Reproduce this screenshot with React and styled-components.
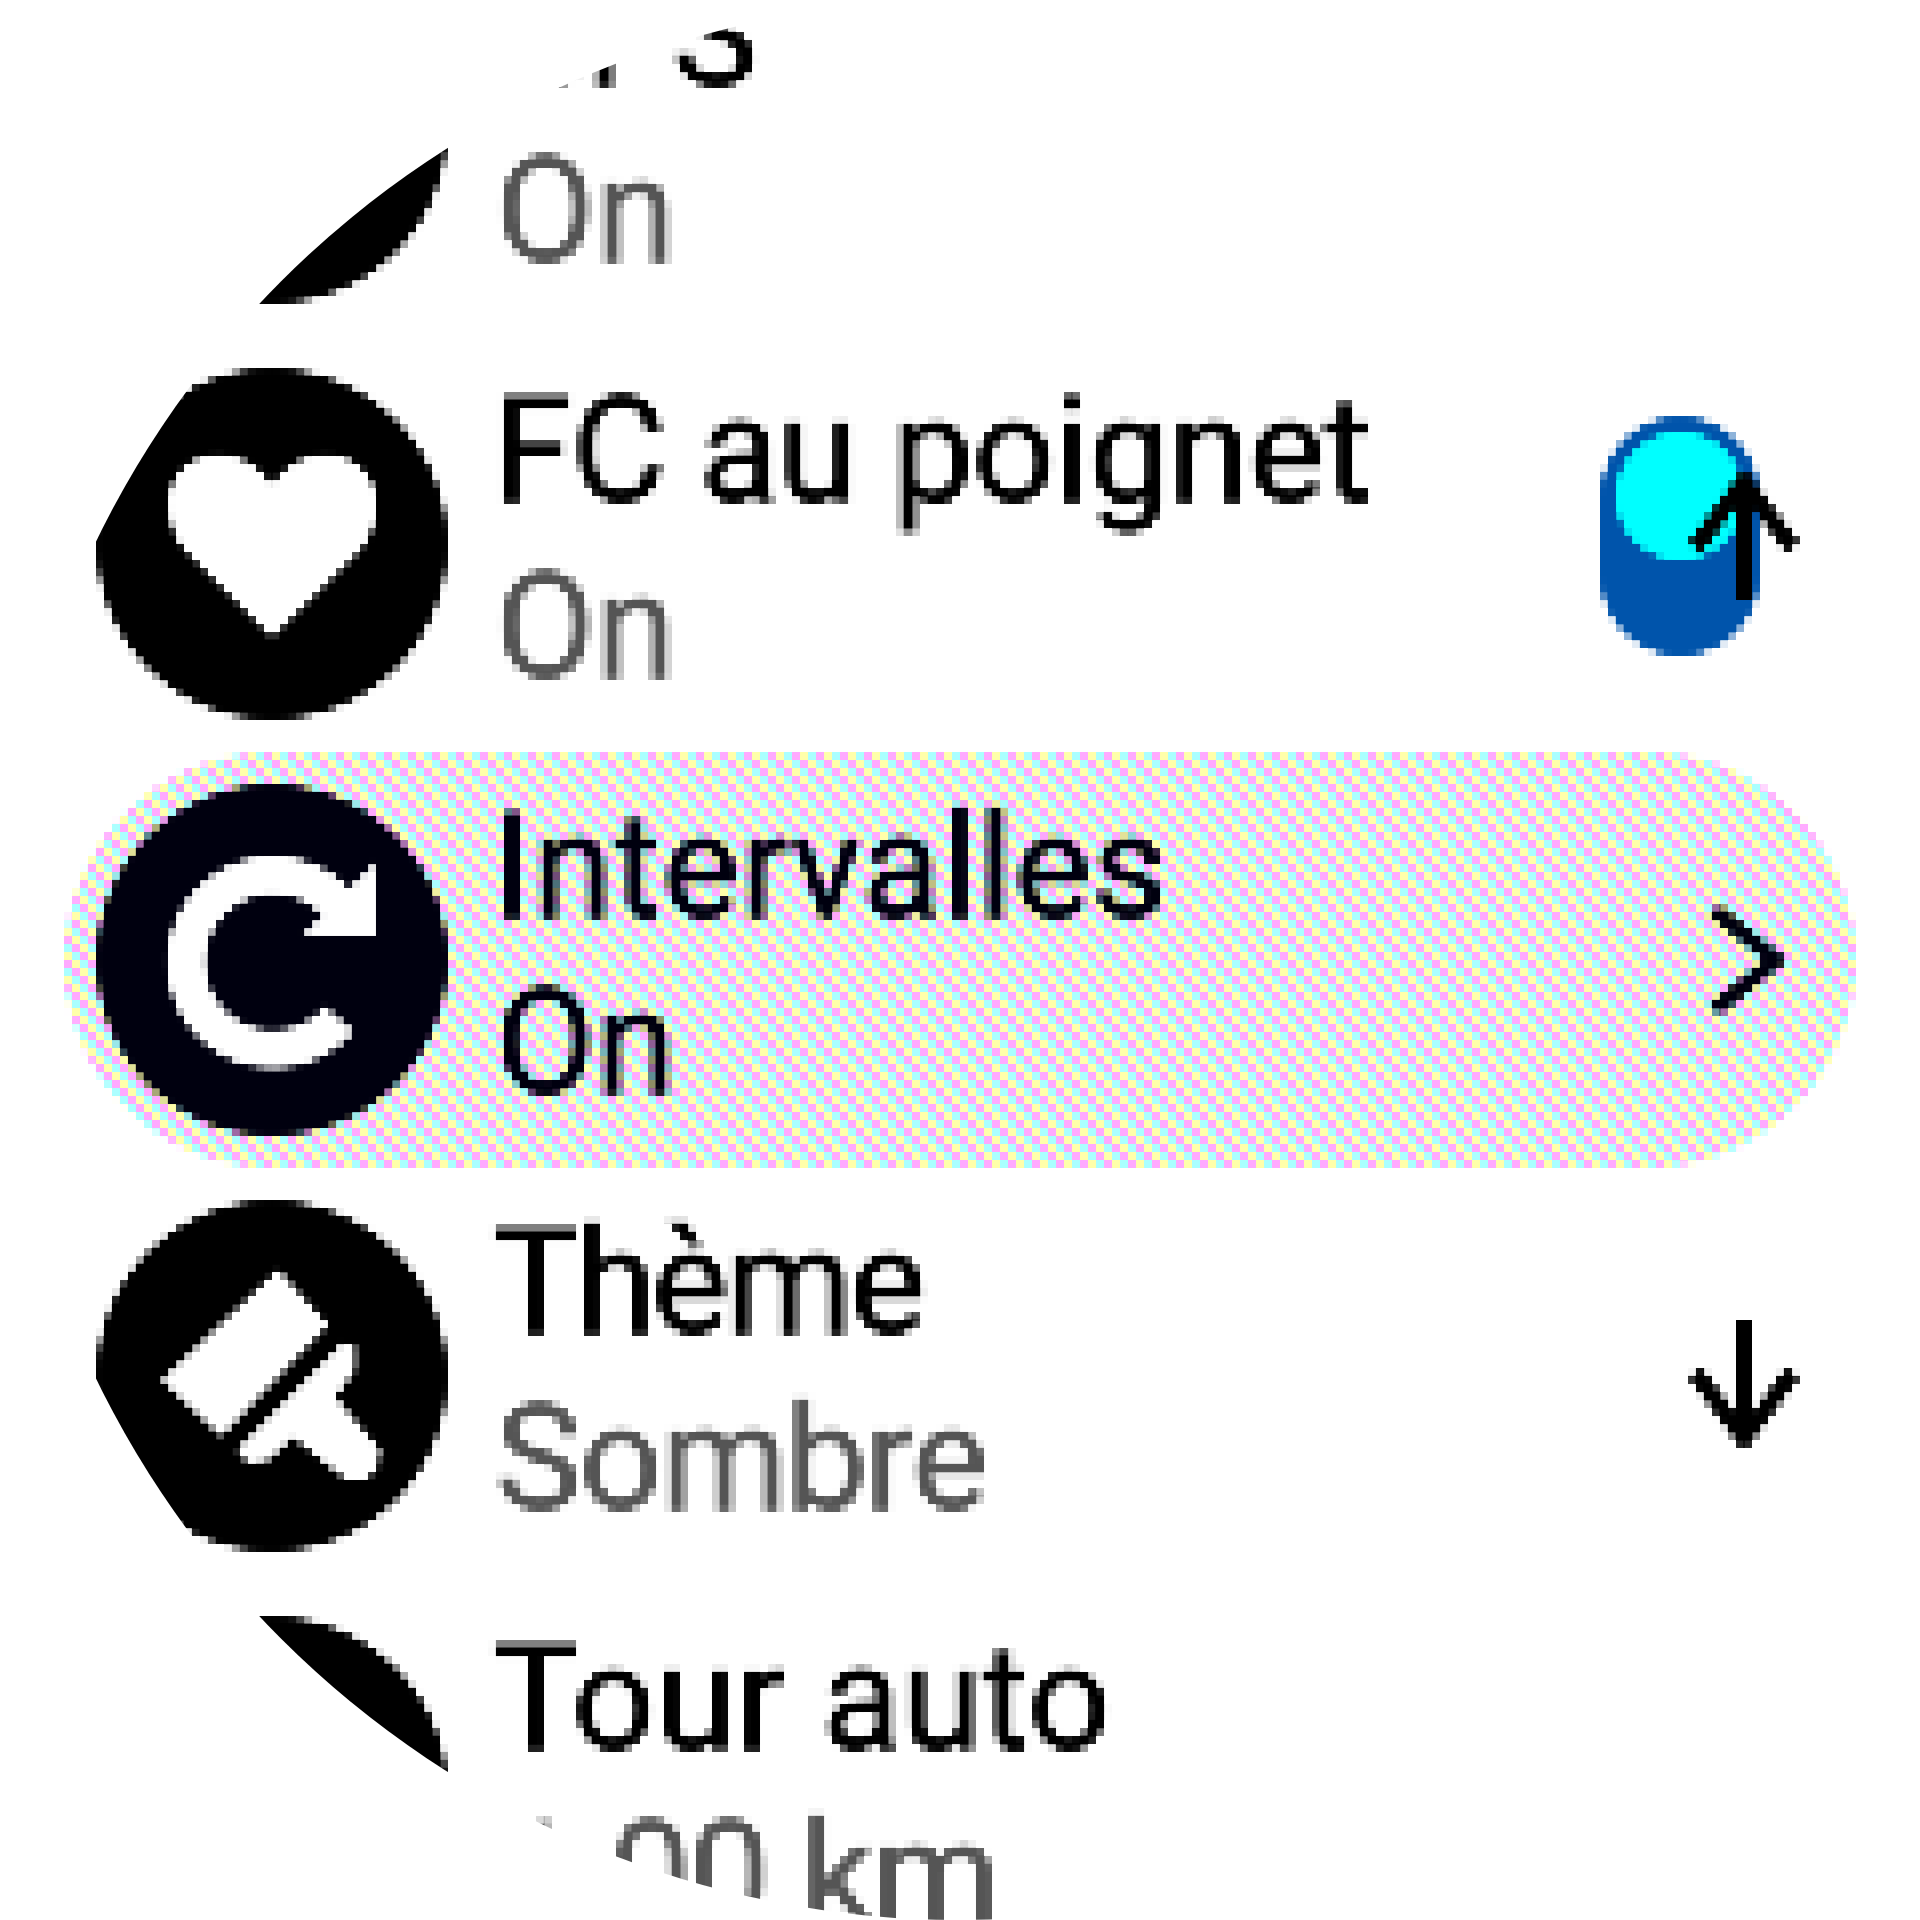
import React from "react";
import styled, { createGlobalStyle } from "styled-components";

const GlobalStyle = createGlobalStyle`
  html, body {
    margin: 0;
    padding: 0;
    background: #fff;
  }
`;

// round watch face, the edge stays sharp while the content is low-res
const Screen = styled.div`
  width: 1920px;
  height: 1920px;
  border-radius: 50%;
  overflow: hidden;
  background: #fff;
`;

const Content = styled.div`
  position: relative;
  width: 1920px;
  height: 1920px;
  display: flex;
  flex-direction: column;
  justify-content: center;
  overflow: hidden;
  background: #fff;
  font-family: Roboto, "Liberation Sans", sans-serif;
  filter: url(#lowres);
`;

const FilterDefs = styled.svg`
  position: absolute;
  width: 0;
  height: 0;
`;

const cell = (color, x, y) =>
  `conic-gradient(from 270deg at 8px 8px, ${color} 25%, transparent 0) ${x}px ${y}px / 24px 24px`;

const Row = styled.div`
  flex: 0 0 416px;
  margin: 0 64px;
  padding-left: 32px;
  display: flex;
  align-items: center;
  gap: 44px;
  border-radius: 208px;
  color: ${(p) => (p.$active ? "#00000f" : "#000")};
  background: ${(p) =>
    p.$active
      ? [
          cell("#ffffaa", 16, 0),
          cell("#ffffaa", 0, 8),
          cell("#ffffaa", 8, 16),
          cell("#aaffff", 0, 0),
          cell("#aaffff", 8, 8),
          cell("#aaffff", 16, 16),
          "#ffaaff",
        ].join(", ")
      : "transparent"};
`;

const IconDisc = styled.svg`
  flex: none;
  width: 352px;
  height: 352px;
  border-radius: 50%;
  background: currentColor;
`;

const Labels = styled.div`
  display: flex;
  flex-direction: column;
  font-size: 146px;
  line-height: 176px;
  position: relative;
  top: -4px;
  -webkit-text-stroke: 2.5px currentColor;
`;

const Title = styled.div`
  white-space: nowrap;
  letter-spacing: ${(p) => p.$track || 0}px;
`;

const Value = styled.div`
  white-space: nowrap;
  padding-left: 3px;
  letter-spacing: ${(p) => p.$track || 0}px;
  color: ${(p) => (p.$strong ? "inherit" : "#555")};
`;

const Toggle = styled.div`
  margin-left: auto;
  margin-right: 96px;
  margin-bottom: 16px;
  width: 160px;
  height: 240px;
  padding: 16px;
  box-sizing: border-box;
  border-radius: 80px;
  background: #0054ab;
`;

const Knob = styled.div`
  width: 128px;
  height: 128px;
  border-radius: 50%;
  background: #00ffff;
`;

const Chevron = styled.svg`
  margin-left: auto;
  margin-right: 68px;
  width: 80px;
  height: 112px;
`;

const ScrollArrow = styled.svg`
  position: absolute;
  right: 120px;
  top: ${(p) => p.$top}px;
  width: 112px;
  height: 128px;
  transform: ${(p) => (p.$up ? "rotate(180deg)" : "none")};
`;

const HeartIcon = () => (
  <IconDisc viewBox="0 0 352 352">
    <path
      fill="#fff"
      d="M176 269 L92 185 C78 171 73 153 73 135 C73 107 95 87 122 87 C145 87 165 100 176 118 C187 100 207 87 230 87 C257 87 280 107 280 135 C280 153 275 171 261 185 Z"
    />
  </IconDisc>
);

const RepeatIcon = () => (
  <IconDisc viewBox="0 0 352 352">
    <path
      fill="none"
      stroke="#fff"
      strokeWidth="38"
      d="M241 119 A87 87 0 1 0 243 235"
    />
    <polygon fill="#fff" points="279,79 279,151 207,151" />
  </IconDisc>
);

const BrushIcon = () => (
  <IconDisc viewBox="0 0 352 352">
    <polygon fill="#fff" points="182,70 66,180 125,236 232,125" />
    <polygon
      fill="#fff"
      points="247,143 259,147 259,170 239,197 284,250 281,270 267,280 251,280 197,237 172,260 152,263 141,250"
    />
  </IconDisc>
);

const EmptyIcon = () => <IconDisc viewBox="0 0 352 352" />;

const DownArrowPaths = () => (
  <>
    <path fill="none" stroke="#000" strokeWidth="16" d="M56 0 V116" />
    <path fill="none" stroke="#000" strokeWidth="18" d="M7 52 L56 118 L105 52" />
  </>
);

export default function App() {
  return (
    <>
      <GlobalStyle />
      <FilterDefs aria-hidden="true">
        {/* averages each 8px block, then holds one sample over the whole block */}
        <filter
          id="lowres"
          x="0"
          y="0"
          width="100%"
          height="100%"
          colorInterpolationFilters="sRGB"
        >
          <feGaussianBlur in="SourceGraphic" stdDeviation="1.4" result="soft" />
          <feFlood x="3" y="3" width="2" height="2" floodColor="#000" />
          <feComposite width="8" height="8" />
          <feTile result="grid" />
          <feComposite in="soft" in2="grid" operator="in" />
          <feMorphology operator="dilate" radius="3" />
        </filter>
      </FilterDefs>
      <Screen>
        <Content>
          <Row>
            <EmptyIcon />
            <Labels>
              <Title $track={-6}>GPS</Title>
              <Value>On</Value>
            </Labels>
          </Row>
          <Row>
            <HeartIcon />
            <Labels>
              <Title $track={-1.4}>FC au poignet</Title>
              <Value>On</Value>
            </Labels>
            <Toggle>
              <Knob />
            </Toggle>
          </Row>
          <Row $active>
            <RepeatIcon />
            <Labels>
              <Title $track={0.6}>Intervalles</Title>
              <Value $strong>On</Value>
            </Labels>
            <Chevron viewBox="0 0 80 112">
              <path
                fill="none"
                stroke="currentColor"
                strokeWidth="16"
                d="M6 6 L68 56 L6 106"
              />
            </Chevron>
          </Row>
          <Row>
            <BrushIcon />
            <Labels>
              <Title $track={-4}>Thème</Title>
              <Value $track={-2.4}>Sombre</Value>
            </Labels>
          </Row>
          <Row>
            <EmptyIcon />
            <Labels>
              <Title>Tour auto</Title>
              <Value $track={-3}>1.00 km</Value>
            </Labels>
          </Row>
          <ScrollArrow $up $top={472} viewBox="0 0 112 128">
            <DownArrowPaths />
          </ScrollArrow>
          <ScrollArrow $top={1320} viewBox="0 0 112 128">
            <DownArrowPaths />
          </ScrollArrow>
        </Content>
      </Screen>
    </>
  );
}
